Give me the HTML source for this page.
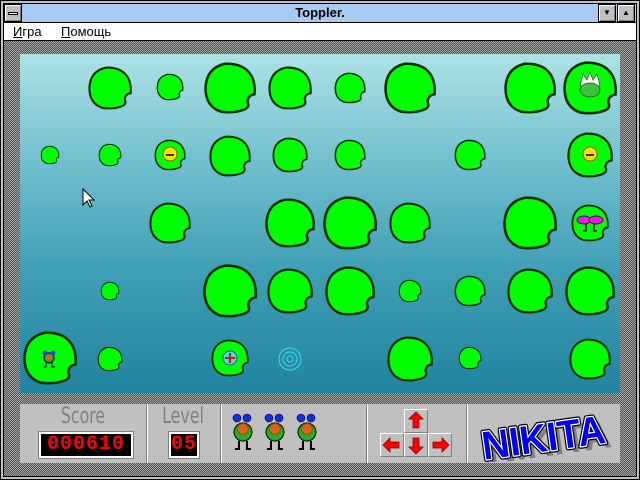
<!DOCTYPE html>
<html><head><meta charset="utf-8"><style>
*{margin:0;padding:0;box-sizing:border-box}
body{width:640px;height:480px;overflow:hidden;background:#c0c0c0;font-family:"Liberation Sans",sans-serif;position:relative}
.abs{position:absolute}
#frame{left:0;top:0;width:640px;height:480px;border:1px solid #000;background:#c0c0c0}
#inner{left:3px;top:3px;width:634px;height:474px;border:1px solid #000;background:repeating-conic-gradient(#505050 0 25%,#a8a8a8 0 50%) 0 0/2px 2px}
#title{left:4px;top:4px;width:632px;height:19px;background:#a6caf0;border-bottom:1px solid #000;text-align:center;font:bold 13px "Liberation Sans",sans-serif;line-height:18px;color:#000}
.btn{top:4px;width:18px;height:18px;background:#c0c0c0;border:1px solid #000;box-shadow:inset 1px 1px #fff,inset -1px -1px #808080;font-size:8px;text-align:center;line-height:16px}
#menu{left:4px;top:23px;width:632px;height:18px;background:#fff;border-bottom:1px solid #000;font:13px "Liberation Sans","DejaVu Sans",sans-serif;line-height:18px}
#menu span{position:absolute;top:0}
#pond{left:20px;top:54px;width:600px;height:339px;background:linear-gradient(#ace2e4 0%,#6cbccc 35%,#3e9eb4 65%,#2184a0 100%)}
#panel{left:20px;top:404px;width:600px;height:59px;background:#c0c0c0}
.div{top:404px;width:2px;height:59px;background:#808080;border-right:1px solid #fff}
.lbl{font:22px "DejaVu Sans Condensed","Liberation Sans Narrow",sans-serif;color:#808080;transform:scaleX(.8);text-align:center}
.lcd{background:#000;border:2px solid #fff;outline:1px solid #808080;color:#f00;font:bold 20px "Liberation Mono",monospace;letter-spacing:1px;text-align:center;line-height:22px}
.ab{width:24px;height:24px;border:1px solid #fff;border-right-color:#808080;border-bottom-color:#808080;background:#c0c0c0}
</style></head><body>
<div id="frame" class="abs"></div>
<div id="inner" class="abs"></div>
<div id="title" class="abs">Toppler.</div>
<div class="abs btn" style="left:4px;width:18px"><div style="margin:7px 3px 0;height:3px;background:#fff;border:1px solid #000"></div></div>
<div class="abs btn" style="left:598px">▼</div>
<div class="abs btn" style="left:617px">▲</div>
<div id="menu" class="abs"><span style="left:9px"><u>И</u>гра</span><span style="left:57px"><u>П</u>омощь</span></div>
<div id="pond" class="abs"></div>
<div id="panel" class="abs"></div>
<div class="abs div" style="left:146px"></div>
<div class="abs div" style="left:220px"></div>
<div class="abs div" style="left:366px"></div>
<div class="abs div" style="left:466px"></div>
<svg class="abs" style="left:0;top:0" width="640" height="480">
<defs>
<path id="pad" d="M0.98,0.25 Q0.72,0.28 0.7,0.55 Q0.8,0.75 0.6,0.85 Q0.2,1.02 -0.35,0.95 Q-0.98,0.75 -0.98,0 Q-0.95,-0.8 -0.2,-0.97 Q0.55,-1.0 0.85,-0.5 Q1.02,-0.2 0.98,0.25 Z"/>
<g id="fr"><circle cx="4" cy="6" r="4" fill="#1030e0" stroke="#000" stroke-width=".6"/><circle cx="14" cy="6" r="4" fill="#1030e0" stroke="#000" stroke-width=".6"/>
<circle cx="10" cy="20" r="9" fill="#20b020" stroke="#000"/><circle cx="10" cy="17" r="5.5" fill="#e06020" stroke="#806000"/>
<path d="M6,29 v8 h-4 M14,29 v8 h4" stroke="#000" stroke-width="2" fill="none"/></g>
</defs>
<g fill="#00ff00" stroke="#003000">
<g stroke-width="0.1">
<use href="#pad" transform="translate(110,88) scale(21)"/>
<use href="#pad" transform="translate(170,87) scale(13)"/>
<use href="#pad" transform="translate(230,88) scale(25)"/>
<use href="#pad" transform="translate(290,88) scale(21)"/>
<use href="#pad" transform="translate(350,88) scale(15)"/>
<use href="#pad" transform="translate(410,88) scale(25)"/>
<use href="#pad" transform="translate(530,88) scale(25)"/>
<use href="#pad" transform="translate(590,88) scale(26)"/>
<use href="#pad" transform="translate(50,155) scale(9)"/>
<use href="#pad" transform="translate(110,155) scale(11)"/>
<use href="#pad" transform="translate(170,155) scale(15)"/>
<use href="#pad" transform="translate(230,156) scale(20)"/>
<use href="#pad" transform="translate(290,155) scale(17)"/>
<use href="#pad" transform="translate(350,155) scale(15)"/>
<use href="#pad" transform="translate(470,155) scale(15)"/>
<use href="#pad" transform="translate(590,155) scale(22)"/>
<use href="#pad" transform="translate(170,223) scale(20)"/>
<use href="#pad" transform="translate(290,223) scale(24)"/>
<use href="#pad" transform="translate(350,223) scale(26)"/>
<use href="#pad" transform="translate(410,223) scale(20)"/>
<use href="#pad" transform="translate(530,223) scale(26)"/>
<use href="#pad" transform="translate(590,223) scale(18)"/>
<use href="#pad" transform="translate(110,291) scale(9)"/>
<use href="#pad" transform="translate(230,291) scale(26)"/>
<use href="#pad" transform="translate(290,291) scale(22)"/>
<use href="#pad" transform="translate(350,291) scale(24)"/>
<use href="#pad" transform="translate(410,291) scale(11)"/>
<use href="#pad" transform="translate(470,291) scale(15)"/>
<use href="#pad" transform="translate(530,291) scale(22)"/>
<use href="#pad" transform="translate(590,291) scale(24)"/>
<use href="#pad" transform="translate(50,358) scale(26)"/>
<use href="#pad" transform="translate(110,359) scale(12)"/>
<use href="#pad" transform="translate(230,358) scale(18)"/>
<use href="#pad" transform="translate(410,359) scale(22)"/>
<use href="#pad" transform="translate(470,358) scale(11)"/>
<use href="#pad" transform="translate(590,359) scale(20)"/>
</g></g>
<path d="M580,86 l3,-12 4,6 3,-8 3,8 4,-6 3,12 z" fill="#fff" stroke="#444" stroke-width="0.7"/>
<ellipse cx="590" cy="90" rx="10" ry="7" fill="#40c040" stroke="#060" stroke-width="0.8"/>
<circle cx="170" cy="154" r="7" fill="#ffe000" stroke="#806000"/><path d="M166,155 h8" stroke="#000" stroke-width="1.5"/>
<circle cx="590" cy="154" r="7" fill="#ffe000" stroke="#806000"/><path d="M586,155 h8" stroke="#000" stroke-width="1.5"/>
<ellipse cx="584" cy="220" rx="7" ry="4" fill="#e020e0" stroke="#600060"/><ellipse cx="596" cy="220" rx="7" ry="4" fill="#e020e0" stroke="#600060"/>
<path d="M586,224 v7 h-3 M594,224 v7 h3" stroke="#000" fill="none" stroke-width="1.5"/>
<circle cx="230" cy="358" r="7" fill="#40e0e0" stroke="#006080"/><path d="M230,353 v10 M225,358 h10" stroke="#f00" stroke-width="2"/>
<g fill="none" stroke="#30e0f0"><circle cx="290" cy="359" r="11"/><circle cx="290" cy="359" r="7"/><circle cx="290" cy="359" r="3"/></g>
<circle cx="49" cy="358" r="5" fill="#30a030" stroke="#000"/><circle cx="45" cy="353" r="2.5" fill="#2040ff"/><circle cx="53" cy="353" r="2.5" fill="#2040ff"/>
<circle cx="49" cy="357" r="3" fill="#e06020"/><path d="M46,362 v5 h-3 M52,362 v5 h3" stroke="#000" fill="none"/>
<path d="M83,189 v16 l4,-4 3,6 2,-1 -3,-6 5,0 z" fill="#fff" stroke="#000"/>
<use href="#fr" x="233" y="412"/><use href="#fr" x="265" y="412"/><use href="#fr" x="297" y="412"/>
</svg>
<div class="abs lbl" style="left:48px;top:404px;width:70px">Score</div>
<div class="abs lcd" style="left:39px;top:432px;width:94px;height:26px">000610</div>
<div class="abs lbl" style="left:150px;top:404px;width:66px">Level</div>
<div class="abs lcd" style="left:169px;top:432px;width:30px;height:26px">05</div>
<div class="abs ab" style="left:404px;top:409px"></div>
<div class="abs ab" style="left:380px;top:433px"></div>
<div class="abs ab" style="left:404px;top:433px"></div>
<div class="abs ab" style="left:428px;top:433px"></div>
<svg class="abs" style="left:380px;top:409px" width="72" height="48" fill="#f00" stroke="#800" stroke-width=".8">
<path d="M36,3 l7,7 h-4 v9 h-6 v-9 h-4 z"/>
<path d="M36,45 l7,-7 h-4 v-9 h-6 v9 h-4 z"/>
<path d="M3,36 l7,-7 v4 h9 v6 h-9 v4 z"/>
<path d="M69,36 l-7,-7 v4 h-9 v6 h9 v4 z"/>
</svg>
<svg class="abs" style="left:476px;top:404px" width="144" height="58">
<g transform="rotate(-8 70 30)" font-family="Liberation Sans" font-weight="bold" font-size="40">
<text x="10" y="52" fill="#808080" textLength="124" lengthAdjust="spacingAndGlyphs">NIKITA</text>
<text x="5" y="47" fill="#0000ff" stroke="#000" stroke-width="5" stroke-linejoin="round" textLength="124" lengthAdjust="spacingAndGlyphs">NIKITA</text>
<text x="5" y="47" fill="#0000ff" stroke="#fff" stroke-width="2.5" paint-order="stroke" stroke-linejoin="round" textLength="124" lengthAdjust="spacingAndGlyphs">NIKITA</text>
</g></svg>
</body></html>
